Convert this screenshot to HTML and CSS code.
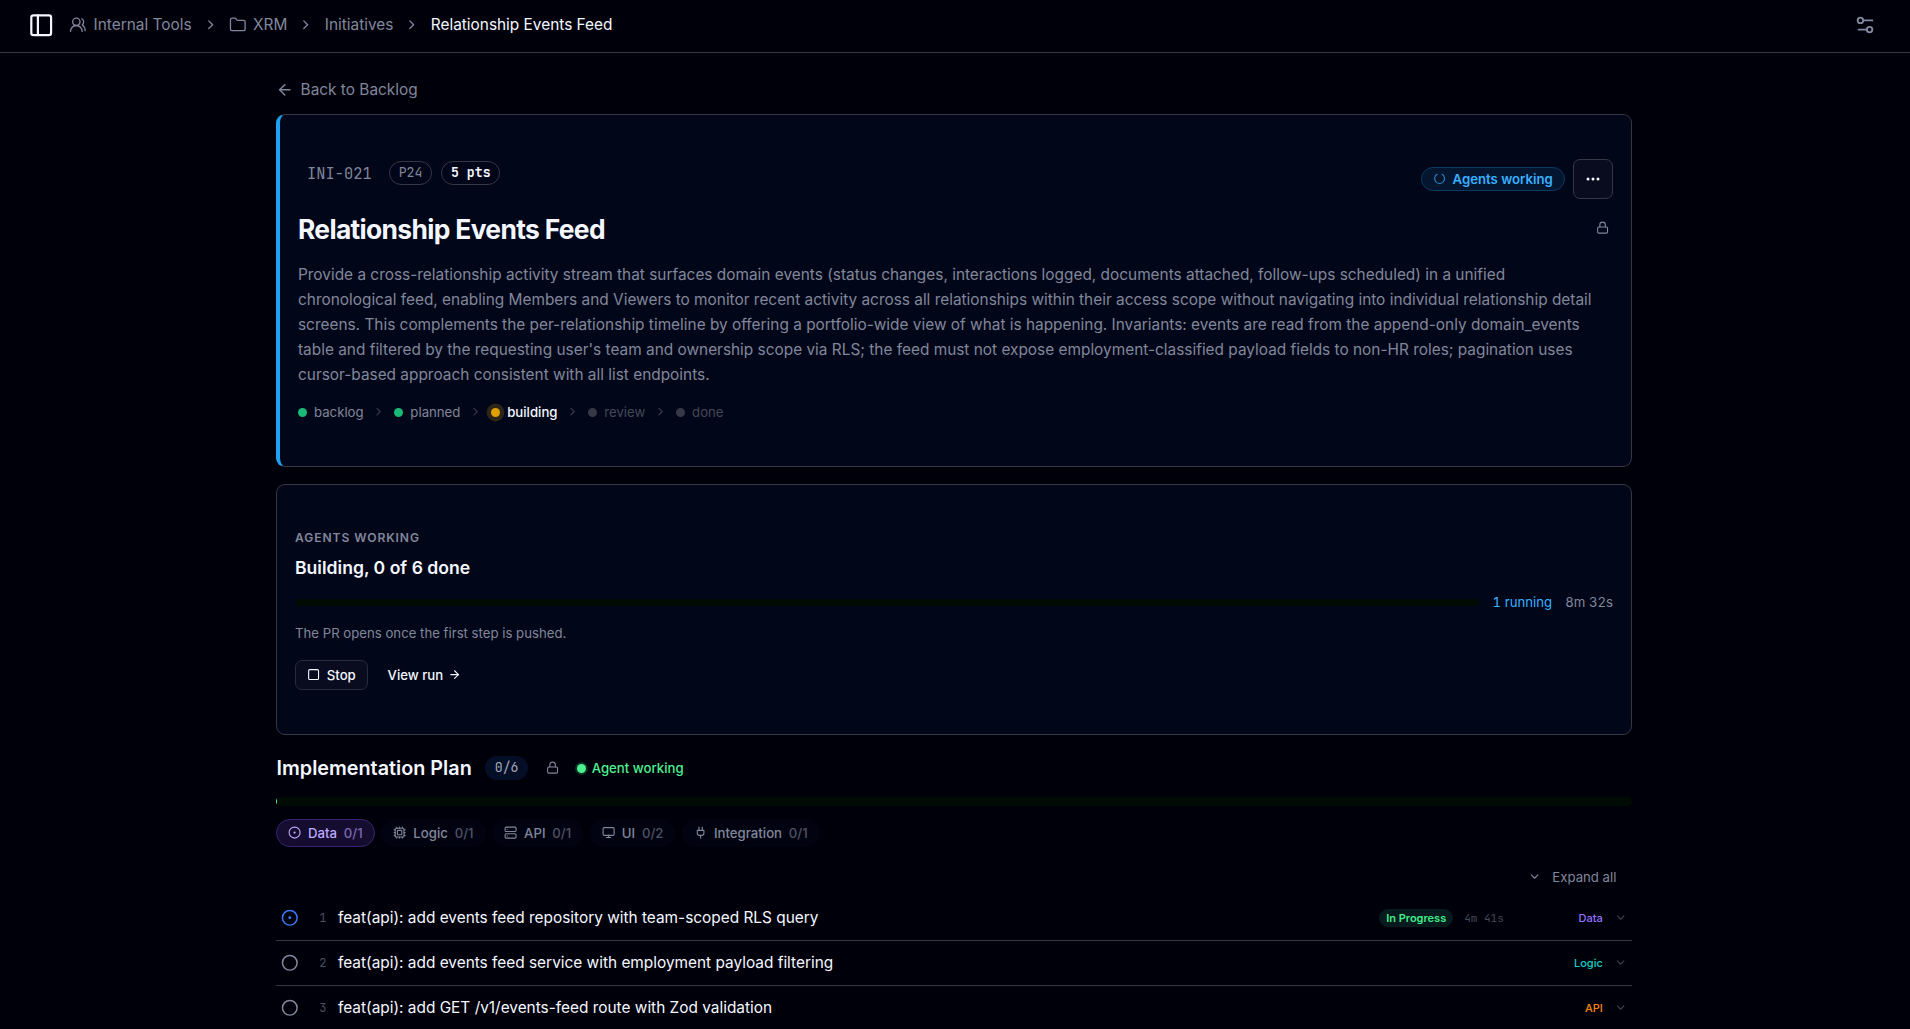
FILE: index.html
```html
<!DOCTYPE html>
<html lang="en">
<head>
  <meta charset="utf-8">
  <title>Relationship Events Feed</title>
  <link rel="stylesheet" href="styles.css">
</head>
<body>
  <!-- shared icons -->
  <svg width="0" height="0" class="sprite">
    <symbol id="chevron-right" viewBox="0 0 24 24"><path d="m9 18 6-6-6-6"/></symbol>
    <symbol id="chevron-down" viewBox="0 0 24 24"><path d="m6 9 6 6 6-6"/></symbol>
    <symbol id="lock" viewBox="0 0 24 24"><rect x="3" y="11" width="18" height="11" rx="2"/><path d="M7 11V7a5 5 0 0 1 10 0v4"/></symbol>
    <symbol id="circle" viewBox="0 0 24 24"><circle cx="12" cy="12" r="10"/></symbol>
    <symbol id="circle-dot" viewBox="0 0 24 24"><circle cx="12" cy="12" r="10"/><circle cx="12" cy="12" r="1"/></symbol>
  </svg>

  <header class="topbar">
    <svg class="icon panel-icon" viewBox="0 0 24 24"><rect x="3" y="3" width="18" height="18" rx="2"/><path d="M9 3v18"/></svg>
    <nav class="crumbs">
      <a class="crumb">
        <svg class="icon crumb-icon" viewBox="0 0 24 24"><path d="M18 21a8 8 0 0 0-16 0"/><circle cx="10" cy="8" r="5"/><path d="M22 20c0-3.37-2-6.5-4-8a5 5 0 0 0-.45-8.3"/></svg>
        Internal Tools
      </a>
      <svg class="icon crumb-sep"><use href="#chevron-right"/></svg>
      <a class="crumb">
        <svg class="icon crumb-icon" viewBox="0 0 24 24"><path d="M20 20a2 2 0 0 0 2-2V8a2 2 0 0 0-2-2h-7.9a2 2 0 0 1-1.69-.9L9.6 3.9A2 2 0 0 0 7.93 3H4a2 2 0 0 0-2 2v13a2 2 0 0 0 2 2Z"/></svg>
        XRM
      </a>
      <svg class="icon crumb-sep"><use href="#chevron-right"/></svg>
      <a class="crumb">Initiatives</a>
      <svg class="icon crumb-sep"><use href="#chevron-right"/></svg>
      <span class="crumb current">Relationship Events Feed</span>
    </nav>
    <svg class="icon settings-icon" viewBox="0 0 24 24"><path d="M20 7h-9"/><path d="M14 17H5"/><circle cx="17" cy="17" r="3"/><circle cx="7" cy="7" r="3"/></svg>
  </header>

  <main class="page">
    <a class="back">
      <svg class="icon back-icon" viewBox="0 0 24 24"><path d="m12 19-7-7 7-7"/><path d="M19 12H5"/></svg>
      Back to Backlog
    </a>

    <section class="card summary">
      <div class="summary-top">
        <div class="meta">
          <span class="key">INI-021</span>
          <span class="pill">P24</span>
          <span class="pill points">5 pts</span>
        </div>
        <div class="actions">
          <span class="agent-pill">
            <svg class="icon spinner" viewBox="0 0 24 24"><path d="M7.5 4.2a9 9 0 1 0 9 0"/></svg>
            Agents working
          </span>
          <button class="more">
            <svg class="more-icon" viewBox="0 0 16 16"><circle cx="3" cy="8" r="1.5"/><circle cx="8" cy="8" r="1.5"/><circle cx="13" cy="8" r="1.5"/></svg>
          </button>
        </div>
      </div>
      <div class="title-row">
        <h1 class="title">Relationship Events Feed</h1>
        <svg class="icon lock"><use href="#lock"/></svg>
      </div>
      <p class="description">Provide a cross-relationship activity stream that surfaces domain events (status changes, interactions logged, documents attached, follow-ups scheduled) in a unified<br>chronological feed, enabling Members and Viewers to monitor recent activity across all relationships within their access scope without navigating into individual relationship detail<br>screens. This complements the per-relationship timeline by offering a portfolio-wide view of what is happening. Invariants: events are read from the append-only domain_events<br>table and filtered by the requesting user's team and ownership scope via RLS; the feed must not expose employment-classified payload fields to non-HR roles; pagination uses<br>cursor-based approach consistent with all list endpoints.</p>
      <div class="stages">
        <span class="stage complete">backlog</span>
        <svg class="icon stage-sep"><use href="#chevron-right"/></svg>
        <span class="stage complete">planned</span>
        <svg class="icon stage-sep"><use href="#chevron-right"/></svg>
        <span class="stage active">building</span>
        <svg class="icon stage-sep"><use href="#chevron-right"/></svg>
        <span class="stage">review</span>
        <svg class="icon stage-sep"><use href="#chevron-right"/></svg>
        <span class="stage">done</span>
      </div>
    </section>

    <section class="card run">
      <div class="eyebrow">Agents working</div>
      <h2 class="run-title">Building, 0 of 6 done</h2>
      <div class="run-progress">
        <div class="track"></div>
        <span class="running">1 running</span>
        <span class="elapsed">8m 32s</span>
      </div>
      <p class="run-note">The PR opens once the first step is pushed.</p>
      <div class="run-actions">
        <button class="stop">
          <svg class="icon stop-icon" viewBox="0 0 24 24"><rect x="3" y="3" width="18" height="18" rx="2"/></svg>
          Stop
        </button>
        <a class="view-run">
          View run
          <svg class="icon arrow-icon" viewBox="0 0 24 24"><path d="M5 12h14"/><path d="m12 5 7 7-7 7"/></svg>
        </a>
      </div>
    </section>

    <section class="plan">
      <div class="plan-head">
        <h2 class="plan-title">Implementation Plan</h2>
        <span class="count">0/6</span>
        <svg class="icon lock"><use href="#lock"/></svg>
        <span class="live">Agent working</span>
      </div>
      <div class="plan-track"><div class="plan-fill"></div></div>

      <div class="tabs">
        <div class="tab active">
          <svg class="icon tab-icon"><use href="#circle-dot"/></svg>
          Data <span class="tab-count">0/1</span>
        </div>
        <div class="tab">
          <svg class="icon tab-icon" viewBox="0 0 24 24"><rect x="4" y="4" width="16" height="16" rx="2"/><rect x="8" y="8" width="8" height="8" rx="1"/><path d="M17 2v2M17 20v2M12 2v2M12 20v2M7 2v2M7 20v2M2 17h2M2 12h2M2 7h2M20 17h2M20 12h2M20 7h2"/></svg>
          Logic <span class="tab-count">0/1</span>
        </div>
        <div class="tab">
          <svg class="icon tab-icon" viewBox="0 0 24 24"><rect x="2" y="2" width="20" height="8" rx="2"/><rect x="2" y="14" width="20" height="8" rx="2"/><path d="M6 6h.01M6 18h.01"/></svg>
          API <span class="tab-count">0/1</span>
        </div>
        <div class="tab">
          <svg class="icon tab-icon" viewBox="0 0 24 24"><rect x="2" y="3" width="20" height="14" rx="2"/><path d="M8 21h8M12 17v4"/></svg>
          UI <span class="tab-count">0/2</span>
        </div>
        <div class="tab">
          <svg class="icon tab-icon" viewBox="0 0 24 24"><path d="M12 22v-5M9 8V2M15 8V2M18 8v5a4 4 0 0 1-4 4h-4a4 4 0 0 1-4-4V8Z"/></svg>
          Integration <span class="tab-count">0/1</span>
        </div>
      </div>

      <div class="expand">
        <svg class="icon chevron"><use href="#chevron-down"/></svg>
        Expand all
      </div>

      <div class="step">
        <svg class="icon step-icon running-icon"><use href="#circle-dot"/></svg>
        <span class="step-no">1</span>
        <span class="step-title">feat(api): add events feed repository with team-scoped RLS query</span>
        <span class="badge">In Progress</span>
        <span class="step-time">4m 41s</span>
        <span class="layer data">Data</span>
        <svg class="icon chevron"><use href="#chevron-down"/></svg>
      </div>
      <div class="step">
        <svg class="icon step-icon"><use href="#circle"/></svg>
        <span class="step-no">2</span>
        <span class="step-title">feat(api): add events feed service with employment payload filtering</span>
        <span class="layer logic">Logic</span>
        <svg class="icon chevron"><use href="#chevron-down"/></svg>
      </div>
      <div class="step">
        <svg class="icon step-icon"><use href="#circle"/></svg>
        <span class="step-no">3</span>
        <span class="step-title">feat(api): add GET /v1/events-feed route with Zod validation</span>
        <span class="layer api">API</span>
        <svg class="icon chevron"><use href="#chevron-down"/></svg>
      </div>
    </section>
  </main>
</body>
</html>
```

FILE: styles.css
```css
:root {
  --bg: #00000b;
  --card: #010619;
  --surface: #090c1f;
  --border: #353744;
  --text: #f4f7ff;
  --muted: #81879a;
  --faint: #444857;
  --blue: #1da1f2;
  --sky: #38b0ff;
  --green: #4df090;
  --mono: "JetBrains Mono", "DejaVu Sans Mono", monospace;
}

* {
  box-sizing: border-box;
}

body {
  margin: 0;
  height: 1029px;
  overflow: hidden;
  background: var(--bg);
  color: var(--text);
  font-family: Inter, sans-serif;
  font-size: 13.2px;
}

h1, h2, p {
  margin: 0;
}

button {
  padding: 0;
  font: inherit;
  color: inherit;
}

.sprite {
  position: absolute;
}

.icon {
  flex: none;
  fill: none;
  stroke: currentColor;
  stroke-width: 2;
  stroke-linecap: round;
  stroke-linejoin: round;
}

/* Top bar */
.topbar {
  display: flex;
  align-items: center;
  height: 53px;
  padding: 0 34px 2px 28px;
  border-bottom: 1px solid var(--border);
}

.panel-icon {
  width: 26.4px;
  height: 26.4px;
}

.crumbs {
  display: flex;
  align-items: center;
  gap: 11px;
  margin-left: 15px;
  padding-bottom: 1px;
  font-size: 15.4px;
  color: var(--muted);
}

.crumb {
  display: flex;
  align-items: center;
  gap: 6.6px;
}

.crumb-icon {
  width: 17.6px;
  height: 17.6px;
  margin-top: 1px;
  stroke-width: 1.8;
}

.crumb-sep {
  width: 15.4px;
  height: 15.4px;
  margin-top: 1px;
}

.crumb.current {
  color: var(--text);
}

.settings-icon {
  width: 22px;
  height: 22px;
  margin-left: auto;
  color: #8289a0;
}

/* Page */
.page {
  width: 1356px;
  margin-left: 276px;
  padding-top: 25px;
}

.back {
  display: flex;
  align-items: center;
  gap: 7px;
  height: 23px;
  margin-bottom: 13px;
  font-size: 15.4px;
  color: var(--muted);
}

.back-icon {
  width: 17.6px;
  height: 17.6px;
}

.card {
  padding: 44px 18px;
  background: var(--card);
  border: 1px solid var(--border);
  border-radius: 9px;
}

/* Summary card */
.summary {
  height: 353px;
  border-left: 4px solid var(--blue);
}

.summary-top {
  display: flex;
  justify-content: space-between;
  align-items: flex-start;
}

.meta {
  display: flex;
  align-items: center;
  gap: 9px;
  margin: 2px 0 0 9px;
  font-family: var(--mono);
  color: var(--muted);
}

.key {
  margin-right: 8px;
  font-size: 15.4px;
}

.pill {
  height: 24px;
  padding: 0 9px;
  border: 1px solid var(--border);
  border-radius: 12px;
  line-height: 22px;
}

.points {
  padding: 0 8.6px;
  font-weight: 700;
  color: var(--text);
}

.actions {
  display: flex;
  align-items: center;
  gap: 8px;
}

.agent-pill {
  display: flex;
  align-items: center;
  gap: 6.4px;
  height: 24px;
  padding: 0 11.2px 1px 11px;
  border: 1px solid #093a62;
  border-radius: 12px;
  background: #03152f;
  font-weight: 600;
  color: var(--sky);
}

.spinner {
  width: 13.2px;
  height: 13.2px;
  margin-top: 1px;
  color: #258ac6;
}

.more {
  display: flex;
  align-items: center;
  justify-content: center;
  width: 40px;
  height: 40px;
  background: var(--surface);
  border: 1px solid var(--border);
  border-radius: 7px;
}

.more-icon {
  width: 16px;
  height: 16px;
  fill: var(--text);
}

.title-row {
  display: flex;
  align-items: flex-start;
  justify-content: space-between;
  margin-top: 14px;
  padding-right: 4px;
}

.title {
  font-size: 26.4px;
  font-weight: 700;
  line-height: 33px;
  letter-spacing: -0.025em;
}

.title-row .lock {
  margin-top: 8px;
}

.lock {
  width: 13.2px;
  height: 13.2px;
  color: var(--muted);
}

.description {
  margin-top: 16px;
  font-size: 15.4px;
  line-height: 25px;
  color: var(--muted);
  white-space: nowrap;
}

.stages {
  display: flex;
  align-items: center;
  gap: 8.8px;
  height: 18px;
  margin-top: 16px;
}

.stage {
  display: flex;
  align-items: center;
  gap: 7px;
  color: var(--faint);
}

.stage::before {
  content: "";
  width: 9px;
  height: 9px;
  border-radius: 50%;
  background: #363848;
}

.stage.complete {
  color: var(--muted);
}

.stage.complete::before {
  background: #18b877;
}

.stage.active {
  font-weight: 500;
  color: var(--text);
}

.stage.active::before {
  background: #dfa000;
  box-shadow: 0 0 0 4.4px #2d2518;
}

.stage-sep {
  width: 13.2px;
  height: 13.2px;
  color: #3a3e4e;
}

/* Run card */
.run {
  height: 251px;
  margin-top: 17px;
}

.eyebrow {
  font-size: 12.1px;
  font-weight: 600;
  line-height: 17px;
  letter-spacing: 0.075em;
  text-transform: uppercase;
  color: var(--muted);
}

.run-title {
  margin-top: 10px;
  font-size: 17.6px;
  font-weight: 600;
  line-height: 24px;
}

.run-progress {
  display: flex;
  align-items: center;
  height: 18px;
  margin-top: 13px;
  font-variant-numeric: tabular-nums;
}

.track {
  flex: 1;
  height: 7px;
  border-radius: 4px;
  background: #000b03;
}

.running {
  margin: 0 13.2px 0 14px;
  color: var(--sky);
}

.elapsed {
  color: var(--muted);
}

.run-note {
  margin-top: 13px;
  line-height: 18px;
  color: var(--muted);
}

.run-actions {
  display: flex;
  align-items: center;
  gap: 19.8px;
  margin-top: 18px;
  font-weight: 500;
}

.stop {
  display: flex;
  align-items: center;
  gap: 6.6px;
  height: 30px;
  padding: 0 11px;
  background: var(--surface);
  border: 1px solid #282b3b;
  border-radius: 7px;
}

.stop-icon,
.arrow-icon {
  width: 13.2px;
  height: 13.2px;
}

.view-run {
  display: flex;
  align-items: center;
  gap: 4.4px;
}

/* Implementation plan */
.plan-head {
  display: flex;
  align-items: center;
  height: 28px;
  margin-top: 19px;
}

.plan-title {
  padding-left: 0.5px;
  font-size: 19.8px;
  font-weight: 600;
}

.count {
  height: 24px;
  margin: 0 18px 0 13.5px;
  padding: 0 9.5px;
  border-radius: 12px;
  background: #050e27;
  font-family: var(--mono);
  line-height: 24px;
  color: #a3abbd;
}

.live {
  display: flex;
  align-items: center;
  gap: 5.5px;
  margin-left: 18px;
  font-weight: 500;
  color: var(--green);
}

.live::before {
  content: "";
  width: 9px;
  height: 9px;
  border-radius: 50%;
  background: var(--green);
  box-shadow: 0 0 0 2px #0d3024;
}

.plan-track {
  height: 9px;
  margin-top: 15px;
  overflow: hidden;
  border-radius: 5px;
  background: #000b03;
}

.plan-fill {
  width: 1px;
  height: 9px;
  background: var(--green);
}

.tabs {
  display: flex;
  gap: 6.6px;
  margin-top: 13px;
}

.tab {
  display: flex;
  align-items: center;
  gap: 6.8px;
  height: 28px;
  padding: 0 11px 1px;
  border: 1px solid transparent;
  border-radius: 14px;
  background: #010311;
  font-weight: 500;
  color: var(--muted);
}

.tab.active {
  border-color: #3b2272;
  background: #150d30;
  color: #bfa8ff;
}

.tab-icon {
  width: 13.2px;
  height: 13.2px;
  margin-top: 1px;
}

.tab-count {
  opacity: 0.6;
}

.expand {
  display: flex;
  align-items: center;
  justify-content: flex-end;
  gap: 11px;
  height: 18px;
  margin: 21px 15.6px 10px 0;
  color: var(--muted);
}

.chevron {
  width: 13.2px;
  height: 13.2px;
}

.step {
  display: flex;
  align-items: center;
  height: 45px;
  padding: 0 5px 1px;
  border-bottom: 1px solid var(--border);
}

.step-icon {
  width: 17.6px;
  height: 17.6px;
  color: var(--muted);
}

.running-icon {
  color: #3b76f6;
}

.step-no {
  width: 28px;
  text-align: right;
  font-family: var(--mono);
  font-size: 12.1px;
  color: #4a4e5d;
}

.step-title {
  margin-left: 11.4px;
  margin-right: auto;
  font-size: 15.4px;
}

.badge {
  height: 18px;
  padding: 0 7px;
  border-radius: 9px;
  background: #071a1d;
  font-size: 11px;
  font-weight: 600;
  line-height: 18px;
  color: #42ec8a;
}

.step-time {
  margin-left: 11px;
  font-family: var(--mono);
  font-size: 11px;
  color: #454856;
}

.layer {
  width: 88px;
  margin-left: 11px;
  text-align: right;
  font-size: 11px;
  font-weight: 500;
}

.layer.data {
  color: #9575ff;
}

.layer.logic {
  color: #16cfc2;
}

.layer.api {
  color: #fa870e;
}

.step .chevron {
  margin-left: 11px;
  color: #3b3e4b;
}
```
